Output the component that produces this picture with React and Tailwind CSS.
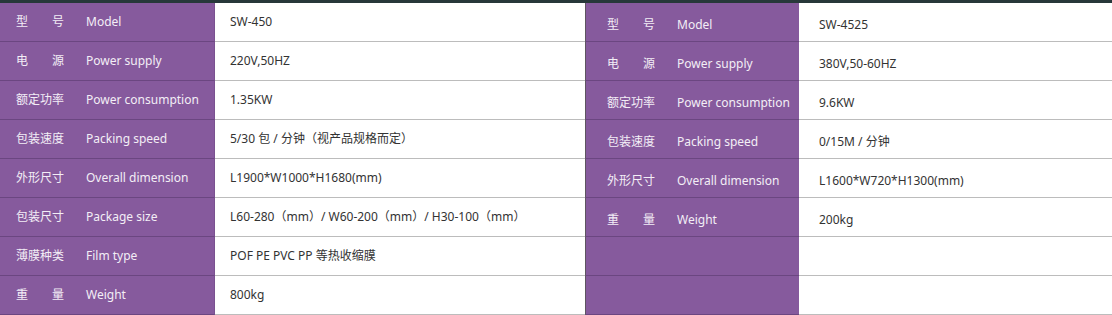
import React from 'react'

const left = [
  ['型号', 'Model', 'SW-450'],
  ['电源', 'Power supply', '220V,50HZ'],
  ['额定功率', 'Power consumption', '1.35KW'],
  ['包装速度', 'Packing speed', '5/30 包 / 分钟（视产品规格而定）'],
  ['外形尺寸', 'Overall dimension', 'L1900*W1000*H1680(mm)'],
  ['包装尺寸', 'Package size', 'L60-280（mm）/ W60-200（mm）/ H30-100（mm）'],
  ['薄膜种类', 'Film type', 'POF PE PVC PP 等热收缩膜'],
  ['重量', 'Weight', '800kg'],
]

const right = [
  ['型号', 'Model', 'SW-4525'],
  ['电源', 'Power supply', '380V,50-60HZ'],
  ['额定功率', 'Power consumption', '9.6KW'],
  ['包装速度', 'Packing speed', '0/15M / 分钟'],
  ['外形尺寸', 'Overall dimension', 'L1600*W720*H1300(mm)'],
  ['重量', 'Weight', '200kg'],
  null,
  null,
]

function CnLabel({ text }) {
  // two-char labels are spread over the width of four chars
  if (text.length === 2) {
    return (
      <span className="w-[48px] flex justify-between">
        <span>{text[0]}</span>
        <span>{text[1]}</span>
      </span>
    )
  }
  return <span className="w-[48px] whitespace-nowrap">{text}</span>
}

function SpecTable({ rows, side }) {
  const isRight = side === 'right'
  return (
    <div className={isRight ? 'flex-1 flex flex-col' : 'w-[585px] flex flex-col'}>
      {rows.map((row, i) => (
        <div key={i} className="flex h-[39px]">
          <div
            className={`flex items-center bg-[#865a9d] text-[#f3eef6] border-b border-[#6b4681] ${
              isRight ? 'w-[214px] pl-[21px] pt-[6px] border-l border-l-[#5e5560]' : 'w-[215px] pl-[16px] pb-[1px] border-r border-r-[#7a5190]'
            }`}
          >
            {row && (
              <>
                <CnLabel text={row[0]} />
                <span className="ml-[22px] whitespace-nowrap">{row[1]}</span>
              </>
            )}
          </div>
          <div
            className={`flex-1 flex items-center bg-white text-[#333] border-b border-[#bcbcbc] whitespace-nowrap ${
              isRight ? 'pl-[20px] pt-[6px]' : 'pl-[15px]'
            }`}
          >
            {row && row[2]}
          </div>
        </div>
      ))}
    </div>
  )
}

export default function App() {
  return (
    <div
      className="w-[1112px] h-[315px] bg-white text-[12px] overflow-hidden"
      style={{ fontFamily: '"Noto Sans", "Noto Sans CJK SC", sans-serif' }}
    >
      <div className="h-[3px] bg-[#27383a]"></div>
      <div className="flex">
        <SpecTable rows={left} side="left" />
        <SpecTable rows={right} side="right" />
      </div>
    </div>
  )
}
